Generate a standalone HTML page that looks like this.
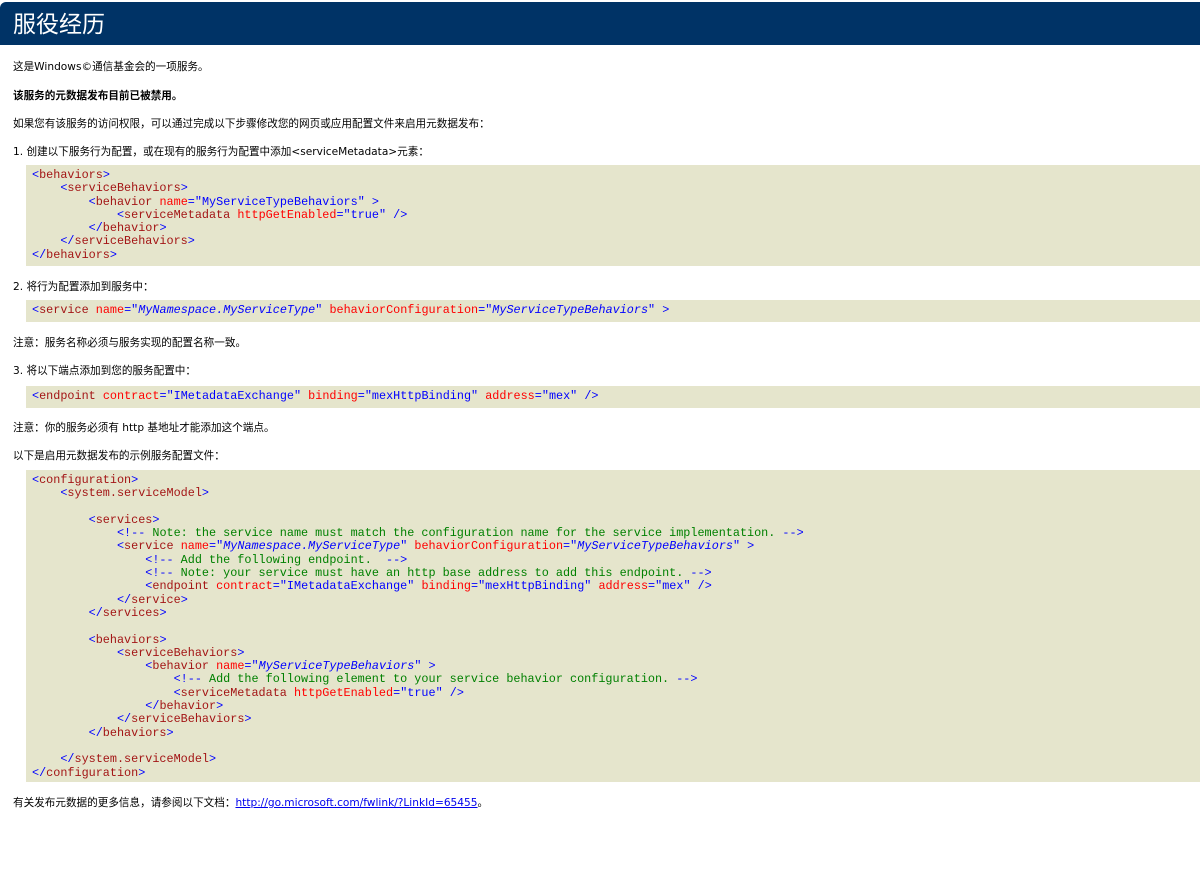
<!DOCTYPE html>
<html><head><meta charset="utf-8"><style>
html,body{margin:0;padding:0;background:#fff;}
body{width:1200px;height:893px;position:relative;overflow:hidden;font-family:"DejaVu Sans","Noto Sans CJK SC",sans-serif;font-size:10.6px;color:#000;}
.hd{position:absolute;left:0;top:2px;width:1200px;height:43px;background:#003366;border-top-left-radius:6px;}
.hd span{position:absolute;left:13px;top:7px;font-size:23px;line-height:30px;color:#fff;font-family:"Liberation Sans","Noto Sans CJK SC",sans-serif;}
.t{position:absolute;left:13px;line-height:13px;white-space:nowrap;}
pre{position:absolute;left:26px;width:1168px;margin:0;padding:4px 0 4px 6px;background:#e5e5cc;font-family:"Liberation Mono",monospace;font-size:11.8px;line-height:13.3px;color:#0000ff;}
.n{color:#a31515}.a{color:#ff0000}.v{color:#0000ff}.i{font-style:italic}.c{color:#008000}
a{color:#0000ee;text-decoration:underline;}
</style></head><body>
<div class="hd"><span>服役经历</span></div>
<div class="t" style="top:61px">这是Windows©通信基金会的一项服务。</div>
<div class="t" style="top:90px;font-weight:bold">该服务的元数据发布目前已被禁用。</div>
<div class="t" style="top:118px">如果您有该服务的访问权限，可以通过完成以下步骤修改您的网页或应用配置文件来启用元数据发布：</div>
<div class="t" style="top:146px">1. 创建以下服务行为配置，或在现有的服务行为配置中添加&lt;serviceMetadata&gt;元素：</div>
<pre style="top:165px;height:93px">&lt;<span class="n">behaviors</span>&gt;
    &lt;<span class="n">serviceBehaviors</span>&gt;
        &lt;<span class="n">behavior</span> <span class="a">name</span>=<span class="v">"MyServiceTypeBehaviors"</span> &gt;
            &lt;<span class="n">serviceMetadata</span> <span class="a">httpGetEnabled</span>=<span class="v">"true"</span> /&gt;
        &lt;/<span class="n">behavior</span>&gt;
    &lt;/<span class="n">serviceBehaviors</span>&gt;
&lt;/<span class="n">behaviors</span>&gt;</pre>
<div class="t" style="top:281px">2. 将行为配置添加到服务中：</div>
<pre style="top:300px;height:14px">&lt;<span class="n">service</span> <span class="a">name</span>=<span class="v">"<i>MyNamespace.MyServiceType</i>"</span> <span class="a">behaviorConfiguration</span>=<span class="v">"<i>MyServiceTypeBehaviors</i>"</span> &gt;</pre>
<div class="t" style="top:337px">注意：服务名称必须与服务实现的配置名称一致。</div>
<div class="t" style="top:365px">3. 将以下端点添加到您的服务配置中：</div>
<pre style="top:386px;height:14px">&lt;<span class="n">endpoint</span> <span class="a">contract</span>=<span class="v">"IMetadataExchange"</span> <span class="a">binding</span>=<span class="v">"mexHttpBinding"</span> <span class="a">address</span>=<span class="v">"mex"</span> /&gt;</pre>
<div class="t" style="top:422px">注意：你的服务必须有 http 基地址才能添加这个端点。</div>
<div class="t" style="top:450px">以下是启用元数据发布的示例服务配置文件：</div>
<pre style="top:470px;height:304px">&lt;<span class="n">configuration</span>&gt;
    &lt;<span class="n">system.serviceModel</span>&gt;

        &lt;<span class="n">services</span>&gt;
            &lt;!-- <span class="c">Note: the service name must match the configuration name for the service implementation.</span> --&gt;
            &lt;<span class="n">service</span> <span class="a">name</span>=<span class="v">"<i>MyNamespace.MyServiceType</i>"</span> <span class="a">behaviorConfiguration</span>=<span class="v">"<i>MyServiceTypeBehaviors</i>"</span> &gt;
                &lt;!-- <span class="c">Add the following endpoint. </span> --&gt;
                &lt;!-- <span class="c">Note: your service must have an http base address to add this endpoint.</span> --&gt;
                &lt;<span class="n">endpoint</span> <span class="a">contract</span>=<span class="v">"IMetadataExchange"</span> <span class="a">binding</span>=<span class="v">"mexHttpBinding"</span> <span class="a">address</span>=<span class="v">"mex"</span> /&gt;
            &lt;/<span class="n">service</span>&gt;
        &lt;/<span class="n">services</span>&gt;

        &lt;<span class="n">behaviors</span>&gt;
            &lt;<span class="n">serviceBehaviors</span>&gt;
                &lt;<span class="n">behavior</span> <span class="a">name</span>=<span class="v">"<i>MyServiceTypeBehaviors</i>"</span> &gt;
                    &lt;!-- <span class="c">Add the following element to your service behavior configuration.</span> --&gt;
                    &lt;<span class="n">serviceMetadata</span> <span class="a">httpGetEnabled</span>=<span class="v">"true"</span> /&gt;
                &lt;/<span class="n">behavior</span>&gt;
            &lt;/<span class="n">serviceBehaviors</span>&gt;
        &lt;/<span class="n">behaviors</span>&gt;

    &lt;/<span class="n">system.serviceModel</span>&gt;
&lt;/<span class="n">configuration</span>&gt;</pre>
<div class="t" style="top:797px">有关发布元数据的更多信息，请参阅以下文档：<a>http://go.microsoft.com/fwlink/?LinkId=65455</a>。</div>
</body></html>
